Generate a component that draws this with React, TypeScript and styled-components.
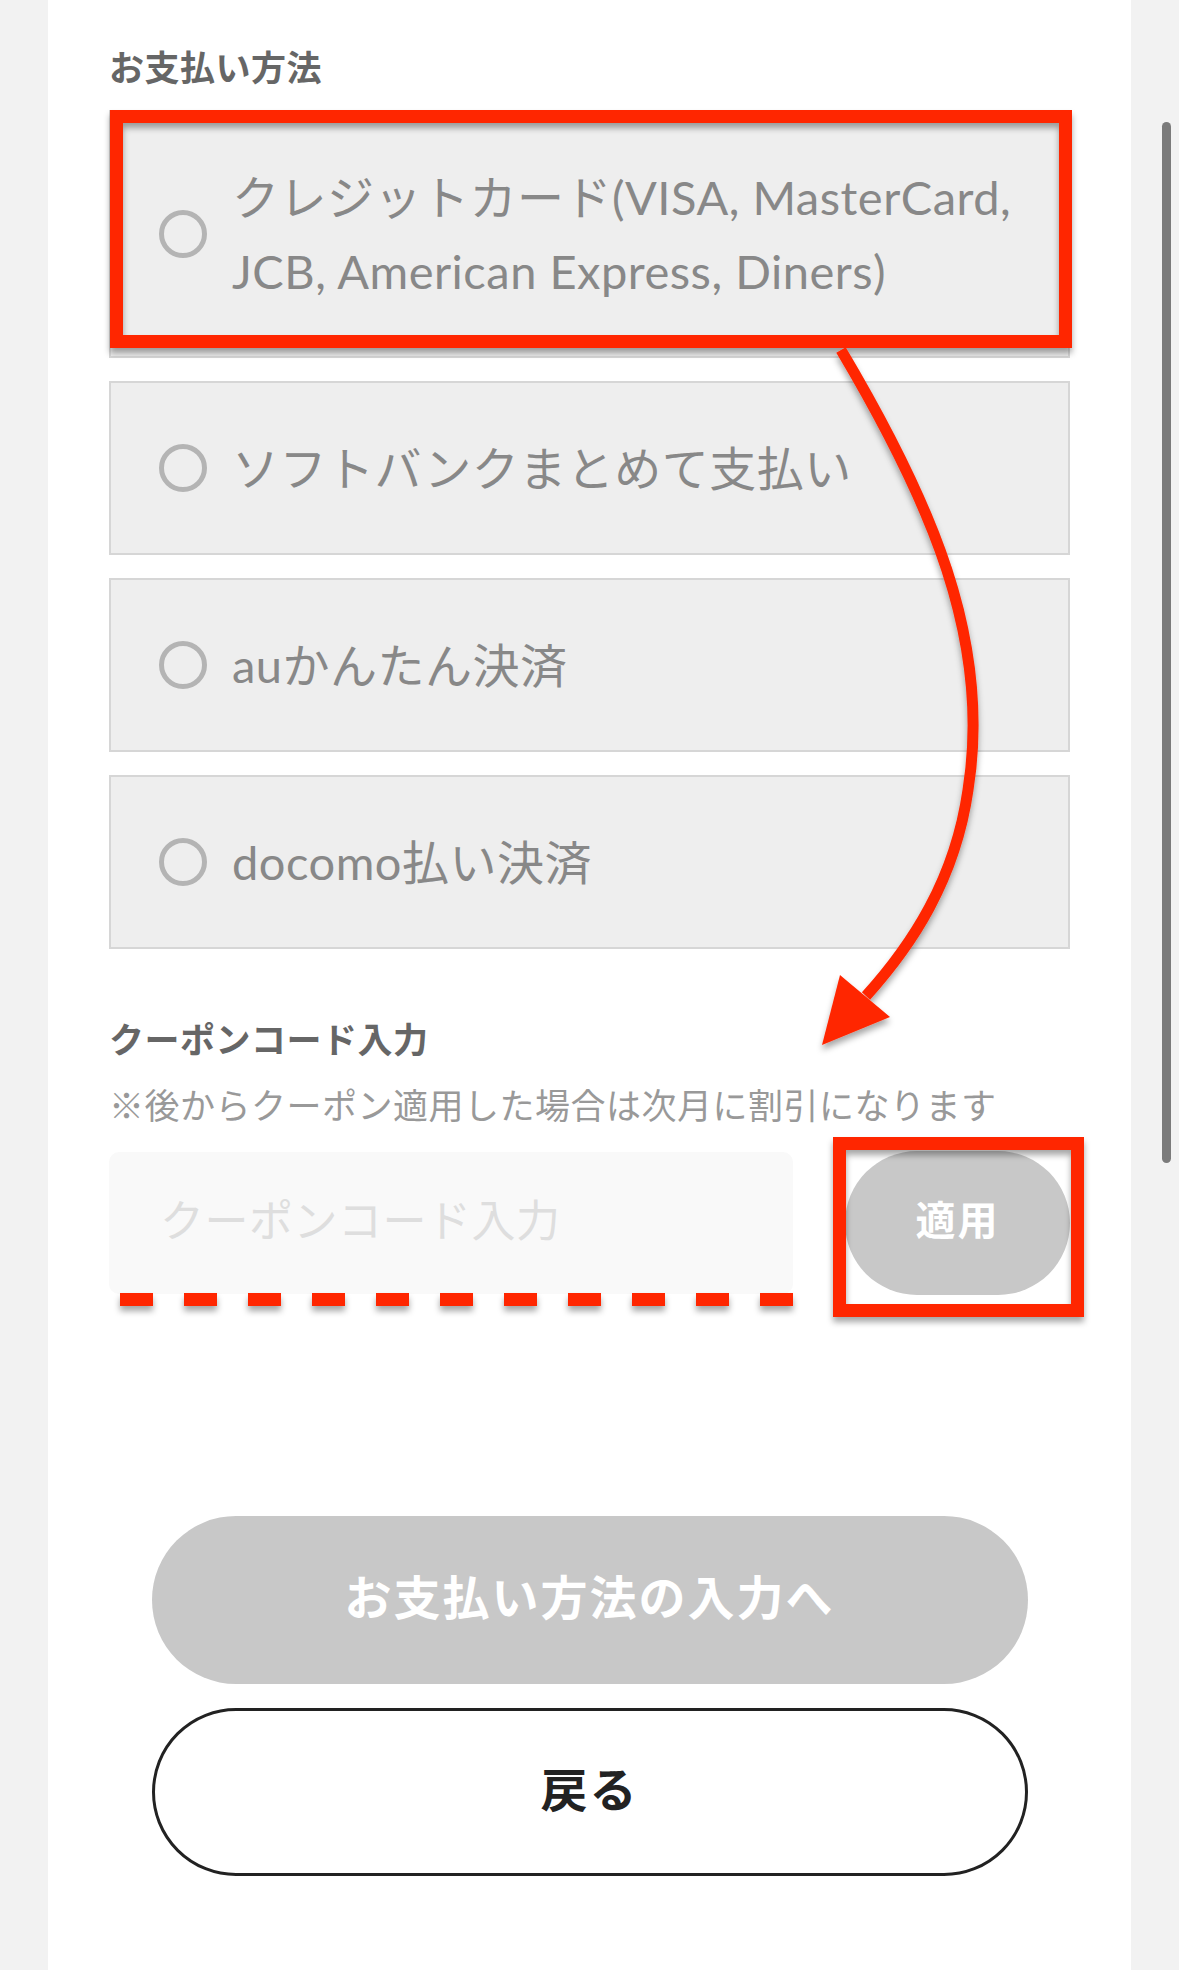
import styled, { createGlobalStyle } from 'styled-components';

const GlobalStyle = createGlobalStyle`
  html, body {
    margin: 0;
    padding: 0;
    background: #f2f2f2;
  }
  * {
    box-sizing: border-box;
  }
`;

const methods = [
  { id: 'card', label: ['クレジットカード(VISA, MasterCard,', 'JCB, American Express, Diners)'] },
  { id: 'softbank', label: ['ソフトバンクまとめて支払い'] },
  { id: 'au', label: ['auかんたん決済'] },
  { id: 'docomo', label: ['docomo払い決済'] },
];

function App() {
  return (
    <Page>
      <GlobalStyle />
      <Gutter />
      <Panel>
        <SectionTitle>お支払い方法</SectionTitle>
        <MethodList>
          {methods.map((m) => (
            <MethodCard key={m.id}>
              <Radio />
              <MethodLabel>
                {m.label.map((line, i) => (
                  <span key={i}>
                    {i > 0 && <br />}
                    {line}
                  </span>
                ))}
              </MethodLabel>
            </MethodCard>
          ))}
        </MethodList>

        <SectionTitle $gap={64}>クーポンコード入力</SectionTitle>
        <Note>※後からクーポン適用した場合は次月に割引になります</Note>
        <CouponRow>
          <CouponInput placeholder="クーポンコード入力" />
          <ApplyButton>適用</ApplyButton>
        </CouponRow>

        <Actions>
          <PrimaryButton>お支払い方法の入力へ</PrimaryButton>
          <BackButton>戻る</BackButton>
        </Actions>
      </Panel>
      <Gutter>
        <ScrollThumb />
      </Gutter>

      {/* red markup drawn over the screenshot */}
      <Markup width="1179" height="1970" viewBox="0 0 1179 1970">
        <defs>
          <filter id="shade" x="-10%" y="-10%" width="120%" height="130%">
            <feDropShadow dx="0" dy="5" stdDeviation="3" floodColor="#000" floodOpacity="0.35" />
          </filter>
        </defs>
        <g filter="url(#shade)" fill="none" stroke="#ff2600">
          <rect x="116.5" y="116.5" width="949" height="225" strokeWidth="13" />
          <rect x="839.5" y="1143.5" width="238" height="167" strokeWidth="13" />
          <path
            d="M 841 350 C 930 500, 992 640, 968 790 C 955 880, 912 945, 866 996"
            strokeWidth="11"
          />
          <line x1="120" y1="1299.5" x2="800" y2="1299.5" strokeWidth="13" strokeDasharray="33 31" />
          <polygon points="822,1045 840,975 890,1017" fill="#ff2600" stroke="none" />
        </g>
      </Markup>
    </Page>
  );
}

const Page = styled.div`
  position: relative;
  display: flex;
  width: 1179px;
  min-height: 1970px;
  font-family: 'Noto Sans CJK JP', sans-serif;
`;

const Gutter = styled.div`
  width: 48px;
  flex-shrink: 0;
  background: #f2f2f2;
`;

const ScrollThumb = styled.div`
  width: 9px;
  height: 1041px;
  margin: 122px 0 0 31px;
  border-radius: 5px;
  background: #7b7b7b;
`;

const Panel = styled.main`
  flex: 1;
  background: #fff;
  padding: 41px 61px 0;
  display: flex;
  flex-direction: column;
`;

const SectionTitle = styled.h2<{ $gap?: number }>`
  margin: ${(p) => p.$gap ?? 0}px 0 0;
  font-size: 35px;
  line-height: 50px;
  font-weight: 700;
  letter-spacing: 0.5px;
  color: #666;
`;

const MethodList = styled.div`
  margin-top: 19px;
  display: flex;
  flex-direction: column;
  gap: 23px;
`;

const MethodCard = styled.label`
  display: flex;
  align-items: center;
  gap: 25px;
  padding: 48px 20px 48px 48px;
  background: #eeeeee;
  border: 2px solid #d6d6d6;
`;

const Radio = styled.span`
  width: 48px;
  height: 48px;
  flex-shrink: 0;
  border-radius: 50%;
  border: 5px solid #b4b4b4;
`;

const MethodLabel = styled.span`
  font-family: Lato, 'Noto Sans CJK JP', sans-serif;
  font-size: 47px;
  line-height: 74px;
  letter-spacing: 0.5px;
  color: #888;
`;

const Note = styled.p`
  margin: 16px 0 0;
  font-size: 35px;
  line-height: 50px;
  letter-spacing: 0.5px;
  color: #999;
`;

const CouponRow = styled.div`
  margin-top: 22px;
  display: flex;
  align-items: center;
  justify-content: space-between;
`;

const CouponInput = styled.input`
  width: 684px;
  height: 142px;
  padding: 0 0 10px 51px;
  border: none;
  border-radius: 10px;
  background: #f9f9f9;
  font-family: 'Noto Sans CJK JP', sans-serif;
  font-size: 44px;
  letter-spacing: 0.5px;
  color: #666;
  outline: none;
  &::placeholder {
    color: #dedede;
  }
`;

const ApplyButton = styled.button`
  width: 225px;
  height: 144px;
  padding: 0 0 10px;
  border: none;
  border-radius: 72px;
  background: #c8c8c8;
  color: #fff;
  font-family: 'Noto Sans CJK JP', sans-serif;
  font-size: 40px;
  font-weight: 700;
  letter-spacing: 2px;
`;

const Actions = styled.div`
  margin-top: 221px;
  display: flex;
  flex-direction: column;
  align-items: center;
  gap: 24px;
`;

const PillButton = styled.button`
  width: 876px;
  height: 168px;
  padding: 0 0 12px;
  border-radius: 84px;
  font-family: 'Noto Sans CJK JP', sans-serif;
  font-size: 47px;
  font-weight: 700;
  letter-spacing: 2px;
`;

const PrimaryButton = styled(PillButton)`
  border: none;
  background: #c8c8c8;
  color: #fff;
`;

const BackButton = styled(PillButton)`
  border: 3px solid #222;
  background: #fff;
  color: #222;
`;

const Markup = styled.svg`
  position: absolute;
  left: 0;
  top: 0;
  pointer-events: none;
`;

export default App;
